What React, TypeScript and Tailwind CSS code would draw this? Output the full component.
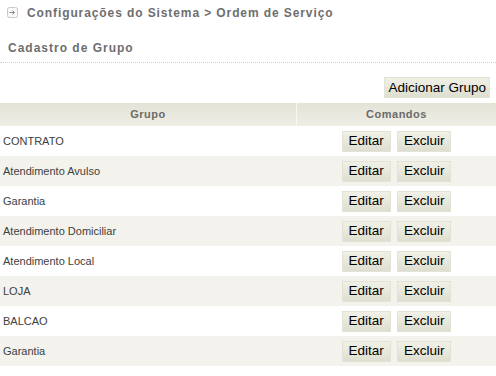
const grupos = [
  'CONTRATO',
  'Atendimento Avulso',
  'Garantia',
  'Atendimento Domiciliar',
  'Atendimento Local',
  'LOJA',
  'BALCAO',
  'Garantia',
];

function Botao({ children, className = 'px-[6px]' }: { children: React.ReactNode; className?: string }) {
  return (
    <button
      className={`h-[21px] ${className} text-[13.5px] leading-none text-black font-['Liberation_Sans',Arial,sans-serif] bg-gradient-to-b from-[#f0f0e6] to-[#deded0] border border-[#e2e2d6]`}
    >
      {children}
    </button>
  );
}

export default function App() {
  return (
    <div className="w-[496px] h-[376px] bg-white overflow-hidden font-['Liberation_Sans',Arial,sans-serif]">
      <div className="flex items-center h-[25px] pl-[7px]">
        <svg width="11" height="11" viewBox="0 0 11 11" className="mr-[9px]">
          <rect x="0.5" y="0.5" width="10" height="10" rx="2" fill="#fafafa" stroke="#c8c8c8" />
          <path d="M2.5 5.5h5M5.5 3.5l2 2-2 2" stroke="#888" fill="none" strokeWidth="1" />
        </svg>
        <span className="text-[12px] leading-[14px] font-bold tracking-[0.9px] text-[#6e6e6e]">
          Configurações do Sistema &gt; Ordem de Serviço
        </span>
      </div>

      <div className="h-[37px] pl-[8px] pt-[16px] text-[12px] leading-[14px] font-bold tracking-[1px] text-[#6e6e6e]">
        Cadastro de Grupo
      </div>
      <div className="border-b border-dotted border-[#cfcfcf]" />

      <div className="flex justify-end pr-[6px] pt-[14px] pb-[5px]">
        <Botao className="px-[3px]">Adicionar Grupo</Botao>
      </div>

      <div className="flex h-[23px] bg-gradient-to-b from-[#e4e3d6] to-[#efeee6] text-[11px] font-bold tracking-[0.5px] text-[#6b6b6b]">
        <div className="w-[297px] flex items-center justify-center border-r border-[#f7f7f2]">Grupo</div>
        <div className="flex-1 flex items-center justify-center">Comandos</div>
      </div>

      {grupos.map((g, i) => (
        <div
          key={i}
          className={`flex h-[30px] items-center ${i % 2 === 1 ? 'bg-[#f3f2ec]' : 'bg-white'}`}
        >
          <div className="w-[297px] pl-[3px] text-[11px] text-[#404040]">{g}</div>
          <div className="flex-1 flex justify-center gap-[6px]">
            <Botao>Editar</Botao>
            <Botao>Excluir</Botao>
          </div>
        </div>
      ))}
    </div>
  );
}
